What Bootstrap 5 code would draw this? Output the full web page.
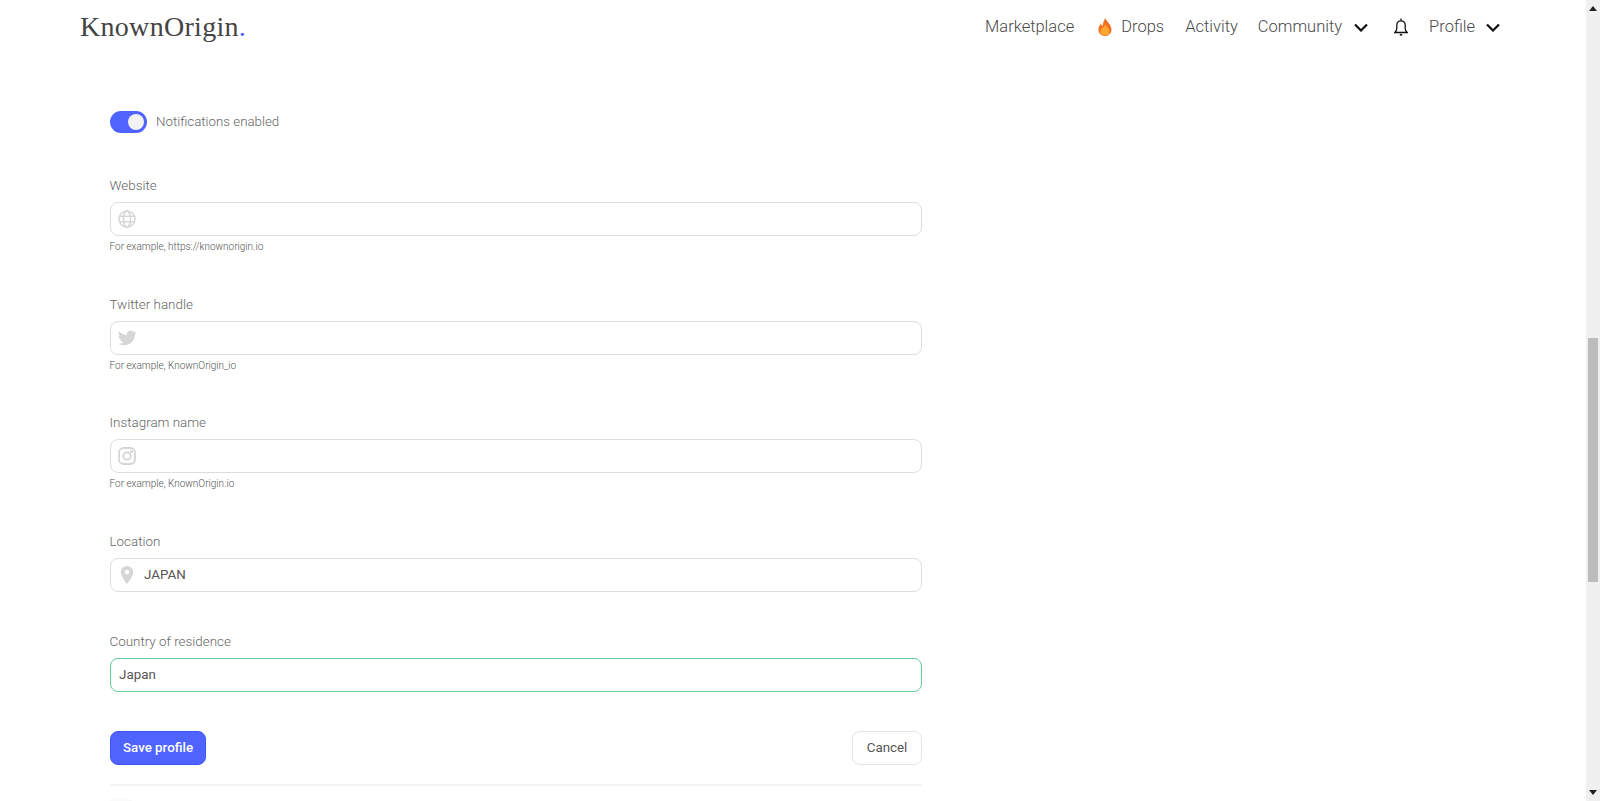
<!DOCTYPE html>
<html lang="en">
<head>
<meta charset="utf-8">
<title>KnownOrigin</title>
<link href="https://cdn.jsdelivr.net/npm/bootstrap@5.3.0/dist/css/bootstrap.min.css" rel="stylesheet">
<style>
html,body{height:100%;overflow:hidden}
body{font-family:Roboto,"Liberation Sans",sans-serif;font-weight:300;color:#4a4a4a;background:#fff}
.page-shell{height:801px}
.page-main{width:1586px;min-width:0}
.top-nav{height:54px;padding:0 86px 0 80px}
.brand-word{font-family:"Liberation Serif",serif;font-size:28px;font-weight:400;color:#444;letter-spacing:.3px;padding:0;margin:0;line-height:54px}
.brand-word span{color:#4f63ff}
.nav-word{font-size:16.5px;color:#4a4a4a;text-decoration:none;line-height:54px}
.form-area{margin-left:110px;width:812px;padding-top:57px}
.toggle-row{height:22px;margin-bottom:42px}
.toggle-track{width:37px;height:22px;border-radius:11px;background:#4f63ff;padding:3px;justify-content:flex-end}
.toggle-knob{width:16px;height:16px;border-radius:50%;background:#f2f2f2}
.toggle-text{font-size:13.3px;color:#666;margin-left:9px}
.field-label{display:block;font-size:13.4px;line-height:20px;color:#666;padding-top:1px;margin:0 0 6px -.5px}
.field-box{height:34px;border:1px solid #dedede;border-radius:8px;padding:0 9px 0 7px;background:#fff}
.field-box.is-good{border-color:#5fcf9c;padding-left:8px}
.field-icon{width:18px;height:18px;flex:none;color:#d6d6d6;margin-right:8px}
.field-input{border:0;outline:0;background:transparent;flex:1;min-width:0;font-family:inherit;font-size:13.4px;font-weight:400;color:#555;padding:0}
.field-help{font-size:10px;line-height:14px;color:#555;margin-top:4px;margin-left:-.5px}
.field-group{margin-bottom:39.6px}
.field-group.no-help{margin-bottom:39px}
.field-group.last-field{margin-bottom:39px}
.btn-save{background:#4f63ff;border:1px solid #3f54f5;color:#fff;font-size:13.33px;font-weight:500;border-radius:8px;height:34px;width:96px;padding:0}
.btn-save:hover{background:#4f63ff;color:#fff}
.btn-cancel{background:#fff;border:1px solid #e4e4e4;color:#555;font-size:13.33px;font-weight:400;border-radius:8px;height:34px;width:70px;padding:0}
.form-rule{border:0;border-top:2px solid #f3f3f3;opacity:1;margin:19px 0 0}
.next-hint{width:22px;height:2px;background:#fafafa;margin-top:13px}
.fake-scroll{width:14px;background:#f0f0f0;position:relative;flex:none}
.scroll-thumb{position:absolute;left:2px;top:338px;width:10px;height:244px;background:#bcbcbc}
.scroll-up,.scroll-down{position:absolute;left:3px;width:8px;height:5px;fill:#222}
.scroll-up{top:6px}
.scroll-down{bottom:6px}
</style>
</head>
<body>
<div class="d-flex page-shell">
<div class="page-main flex-grow-1">
<nav class="navbar navbar-expand top-nav d-flex justify-content-between align-items-center flex-nowrap">
  <a class="navbar-brand brand-word" href="#">KnownOrigin<span>.</span></a>
  <div class="d-flex align-items-center">
    <a class="nav-word" href="#">Marketplace</a>
    <svg viewBox="0 0 14 18" width="14" height="18" style="margin-left:24px;margin-right:9px">
      <path d="M7.200 0C7.800 3 13.500 6.200 13.500 11.500 13.500 15.500 10.500 18 7 18S.5 15.500.5 11.500C.5 8.800 2 6.800 3 5.500c.3 1.300.9 2.200 1.600 2.600C5 5.500 5.800 2.500 7.200 0Z" fill="#f4701f"/>
      <path d="M7.200 6.500c1 2 4.300 3.800 4.300 7 0 2.500-2 4-4.500 4s-4.500-1.500-4.500-4c0-3 3.600-4.200 4.700-7Z" fill="#ffa733"/>
    </svg>
    <a class="nav-word" href="#">Drops</a>
    <a class="nav-word" href="#" style="margin-left:21px">Activity</a>
    <a class="nav-word" href="#" style="margin-left:20px">Community</a>
    <svg viewBox="0 0 14 9" width="14" height="9" style="margin-left:12px" fill="none" stroke="#111" stroke-width="2.200"><path d="M1 1.500l6 6 6-6"/></svg>
    <svg viewBox="0 0 14 18" width="14" height="18" style="margin-left:26px" fill="none" stroke="#111" stroke-width="1.300"><path d="M.8 14.500c1.500-1 2-2.200 2-4.300V7a4.200 4.200 0 0 1 8.400 0v3.200c0 2.100.5 3.300 2 4.300Z"/><path d="M7 .5v2"/><path d="M5.800 16.800h2.400" stroke-width="1.600"/></svg>
    <a class="nav-word" href="#" style="margin-left:21px">Profile</a>
    <svg viewBox="0 0 14 9" width="14" height="9" style="margin-left:11px" fill="none" stroke="#111" stroke-width="2.200"><path d="M1 1.500l6 6 6-6"/></svg>
  </div>
</nav>
<main class="form-area">
  <div class="d-flex align-items-center toggle-row">
    <div class="d-flex align-items-center toggle-track"><div class="toggle-knob"></div></div>
    <span class="toggle-text">Notifications enabled</span>
  </div>

  <div class="field-group">
    <label class="field-label">Website</label>
    <div class="d-flex align-items-center field-box">
      <svg class="field-icon" viewBox="0 0 18 18" fill="none" stroke="currentColor" stroke-width="1.500"><circle cx="9" cy="9" r="8"/><ellipse cx="9" cy="9" rx="3.500" ry="8"/><path d="M1.500 6.300h15M1.500 11.700h15"/></svg>
      <input class="field-input" type="text">
    </div>
    <div class="field-help">For example, https://knownorigin.io</div>
  </div>

  <div class="field-group">
    <label class="field-label">Twitter handle</label>
    <div class="d-flex align-items-center field-box">
      <svg class="field-icon" viewBox="0 0 24 24" fill="currentColor"><path d="M23.950 4.570a10 10 0 0 1-2.820.770 4.960 4.960 0 0 0 2.160-2.720c-.950.550-2 .950-3.130 1.190a4.920 4.920 0 0 0-8.380 4.480C7.690 8.100 4.070 6.130 1.640 3.160a4.820 4.820 0 0 0-.670 2.480c0 1.710.870 3.210 2.190 4.100a4.900 4.900 0 0 1-2.230-.620v.060a4.920 4.920 0 0 0 3.950 4.830 5 5 0 0 1-2.210.080 4.940 4.940 0 0 0 4.610 3.420A9.870 9.870 0 0 1 1 19.540a14 14 0 0 0 7.560 2.210c9.050 0 14-7.500 14-13.980 0-.210 0-.420-.020-.630a9.940 9.940 0 0 0 2.410-2.570Z"/></svg>
      <input class="field-input" type="text">
    </div>
    <div class="field-help">For example, KnownOrigin_io</div>
  </div>

  <div class="field-group">
    <label class="field-label">Instagram name</label>
    <div class="d-flex align-items-center field-box">
      <svg class="field-icon" viewBox="0 0 18 18" fill="none" stroke="currentColor" stroke-width="1.800"><rect x="1" y="1" width="16" height="16" rx="4.500"/><circle cx="9" cy="9" r="3.700"/><circle cx="13.500" cy="4.500" r=".6" fill="currentColor"/></svg>
      <input class="field-input" type="text">
    </div>
    <div class="field-help">For example, KnownOrigin.io</div>
  </div>

  <div class="field-group no-help">
    <label class="field-label">Location</label>
    <div class="d-flex align-items-center field-box">
      <svg class="field-icon" viewBox="0 0 18 18" fill="currentColor"><path fill-rule="evenodd" d="M9 0a6.200 6.200 0 0 0-6.200 6.200C2.800 10.500 9 18 9 18s6.200-7.500 6.200-11.800A6.200 6.200 0 0 0 9 0Zm0 8.400a2.300 2.300 0 1 1 0-4.600 2.300 2.300 0 0 1 0 4.600Z"/></svg>
      <input class="field-input" type="text" value="JAPAN">
    </div>
  </div>

  <div class="field-group last-field">
    <label class="field-label">Country of residence</label>
    <div class="d-flex align-items-center field-box is-good">
      <input class="field-input" type="text" value="Japan">
    </div>
  </div>

  <div class="d-flex justify-content-between">
    <button class="btn btn-save" type="button">Save profile</button>
    <button class="btn btn-cancel" type="button">Cancel</button>
  </div>
  <hr class="form-rule">
  <div class="next-hint"></div>
</main>
</div>
<div class="fake-scroll">
  <svg class="scroll-up" viewBox="0 0 8 5"><path d="M4 0l4 5H0Z"/></svg>
  <div class="scroll-thumb"></div>
  <svg class="scroll-down" viewBox="0 0 8 5"><path d="M0 0h8L4 5Z"/></svg>
</div>
</div>
<script src="https://cdn.jsdelivr.net/npm/bootstrap@5.3.0/dist/js/bootstrap.bundle.min.js"></script>
</body>
</html>
